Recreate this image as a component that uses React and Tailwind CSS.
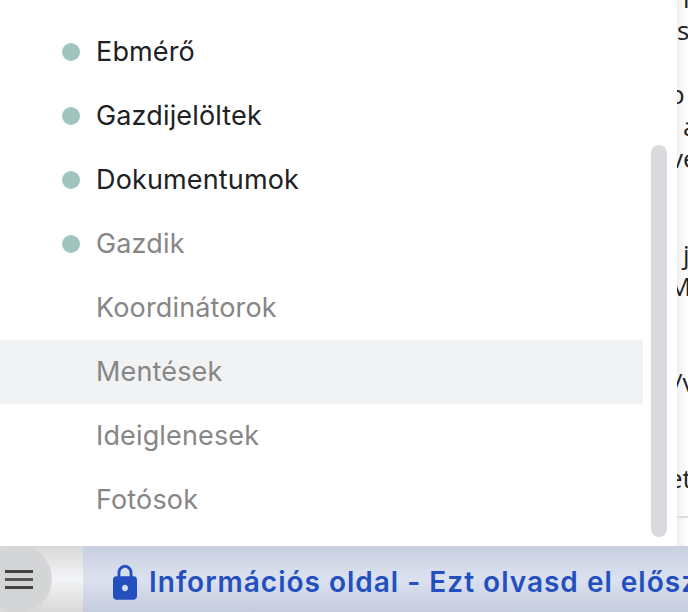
const items = [
  { label: 'Ebmérő', dot: true, dark: true },
  { label: 'Gazdijelöltek', dot: true, dark: true },
  { label: 'Dokumentumok', dot: true, dark: true },
  { label: 'Gazdik', dot: true },
  { label: 'Koordinátorok' },
  { label: 'Mentések', active: true },
  { label: 'Ideiglenesek' },
  { label: 'Fotósok' },
];

const behindLines = [
  { text: 'l', indent: 'pl-[6px]' },
  { text: 's', indent: 'pl-0' },
  { text: '', indent: '' },
  { text: 'o', indent: '-ml-[8px]' },
  { text: 'a', indent: 'pl-[6px]' },
  { text: 've', indent: '-ml-[7px]' },
  { text: '', indent: '' },
  { text: '', indent: '' },
  { text: 'j', indent: 'pl-[6px]' },
  { text: 'M', indent: '-ml-[9px]' },
  { text: '', indent: '' },
  { text: '', indent: '' },
  { text: '/v', indent: '-ml-[4px]' },
  { text: '', indent: '' },
  { text: '', indent: '' },
  { text: 'et', indent: '-ml-[9px]' },
];

export default function App() {
  return (
    <div className="w-[688px] h-[612px] overflow-hidden flex flex-col bg-white font-['Inter',sans-serif]">
      <div className="flex h-[546px] shrink-0">
        {/* menu panel */}
        <div className="relative w-[677px] h-[546px] shrink-0 bg-white rounded-br-[10px] pt-[20px] z-10">
          {items.map((item) => (
            <div
              key={item.label}
              className={`flex items-center h-[64px] w-[643px] ${item.active ? 'bg-[#f1f2f4]' : ''}`}
            >
              <div className="w-[96px] shrink-0 pl-[62px]">
                {item.dot && <div className="w-[18px] h-[18px] rounded-full bg-[#9fc5bf]" />}
              </div>
              <span className={`text-[27px] leading-[32px] tracking-[0.15px] ${item.dark ? 'text-[#202124]' : 'text-[#868686]'}`}>
                {item.label}
              </span>
            </div>
          ))}
          {/* scrollbar thumb */}
          <div className="absolute left-[651px] top-[145px] w-[16px] h-[392px] rounded-full bg-[#d9dade]" />
        </div>

        {/* page text peeking out behind the panel */}
        <div className="relative flex-1 overflow-hidden bg-gradient-to-r from-[#efefef] to-white">
          <div className="-mt-[18px] font-['Open_Sans',sans-serif] text-[26px] text-[#222]">
            {behindLines.map((line, i) => (
              <div key={i} className={`h-[32px] leading-[32px] whitespace-nowrap ${line.indent}`}>
                {line.text}
              </div>
            ))}
          </div>
          <div className="absolute left-0 right-0 top-[516px] h-[2px] bg-[#dcdcdc]" />
        </div>
      </div>

      {/* bottom bar */}
      <div className="flex h-[66px] shrink-0">
        <div className="w-[83px] shrink-0 flex items-center overflow-hidden bg-gradient-to-b from-[#d8d8d8] via-[#f3f4f6] to-[#d8d8d8]">
          <div className="-ml-[16px] w-[68px] h-[68px] shrink-0 rounded-full bg-[#d4d5d7] flex flex-col items-end justify-center gap-[5px] pr-[19px]">
            <div className="w-[28px] h-[3px] bg-[#444444]" />
            <div className="w-[28px] h-[3px] bg-[#555555]" />
            <div className="w-[28px] h-[3px] bg-[#444444]" />
          </div>
        </div>
        <div className="flex-1 flex items-center overflow-hidden pl-[24px] pt-[8px] bg-gradient-to-b from-[#c8cfdf] via-[#dbe1ef] to-[#c5ccdc]">
          <svg width="36" height="40" viewBox="0 0 24 24" preserveAspectRatio="none" fill="#2350be" className="shrink-0">
            <path d="M18 8h-1V6c0-2.76-2.24-5-5-5S7 3.24 7 6v2H6c-1.1 0-2 .9-2 2v10c0 1.1.9 2 2 2h12c1.1 0 2-.9 2-2V10c0-1.1-.9-2-2-2zm-6 9c-1.1 0-2-.9-2-2s.9-2 2-2 2 .9 2 2-.9 2-2 2zM15.1 8H8.9V6c0-1.71 1.39-3.1 3.1-3.1 1.71 0 3.1 1.39 3.1 3.1v2z" />
          </svg>
          <span className="ml-[6px] mb-[2px] text-[28px] font-semibold tracking-[1px] text-[#2350be] whitespace-nowrap">
            Információs oldal - Ezt olvasd el először
          </span>
        </div>
      </div>
    </div>
  );
}
